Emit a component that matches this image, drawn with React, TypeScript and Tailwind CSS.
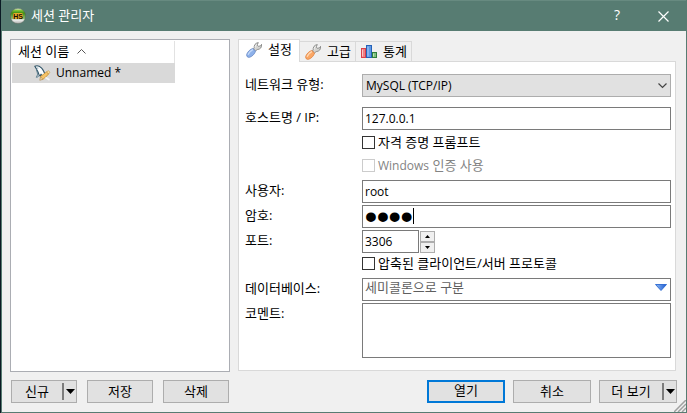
import { useState } from "react";
import type { ReactNode } from "react";

const tabs = [
  { id: "settings", label: "설정" },
  { id: "advanced", label: "고급" },
  { id: "stats", label: "통계" },
];

const fieldClass =
  "block h-[23px] w-full rounded-none border border-[#7a7a7a] bg-white px-[2px] pb-px text-xs text-black outline-none";
const buttonClass = "h-[23px] border border-[#adadad] bg-[#e1e1e1] pb-[2px] text-[13px] leading-[18px]";

function AppIcon() {
  return (
    <svg width="16" height="16" viewBox="0 0 16 16" aria-hidden="true">
      <defs>
        <linearGradient id="ball" x1="0" y1="0" x2="0" y2="1">
          <stop offset="0" stopColor="#f4f7ee" />
          <stop offset="0.14" stopColor="#7fc436" />
          <stop offset="0.3" stopColor="#3f8f12" />
          <stop offset="0.68" stopColor="#8fb873" />
          <stop offset="0.75" stopColor="#f2f2f2" />
          <stop offset="1" stopColor="#a9aca9" />
        </linearGradient>
      </defs>
      <circle cx="8" cy="8" r="7.7" fill="url(#ball)" stroke="#4c5f50" strokeWidth="0.5" />
      <rect x="3" y="5" width="10" height="6" rx="1.500" fill="#e8a92c" />
      <text x="8" y="10.500" textAnchor="middle" fontSize="7" fontWeight="700" fontFamily="Liberation Sans, sans-serif" fill="#1a1200">
        HS
      </text>
    </svg>
  );
}

function DolphinIcon() {
  return (
    <svg width="17" height="16" viewBox="0 0 17 16" aria-hidden="true">
      <path
        d="M.8 1.2C3 .2 5.5 1 7.4 2.8c1.5 1.4 2 2.9 2.8 4.6.6 1.3 1.6 1.8 2.4 3.2-1.6-.2-2.6.3-3.2 1.4-.7-1.3-1.8-1.7-2.4-2.8l-.8 1.9C4.900 10.500 4.800 9 4.300 7.600 3.700 5.900 2.700 5.100 2.300 3.600Z"
        fill="#fbfdfe"
        stroke="#2f5366"
        strokeWidth="1.100"
        strokeLinejoin="round"
      />
      <path d="M2.300 3.600c.4 3 1.300 3.600 1.200 6.200l-1.200 2.500c1.700-.1 2.300-.9 3-2" fill="none" stroke="#53788a" strokeWidth="0.9" />
      <circle cx="3.800" cy="2.900" r="0.500" fill="#3c6478" />
      <path d="M6.500 11.500 12.500 7l2.200 1.800-1.100 1.400-4.800 4.200-2.300-.3Z" fill="#f6c468" stroke="#c98e2f" strokeWidth="0.8" />
      <path d="m12.500 7 1.800-1.300 1.700 1.600-1.300 1.500Z" fill="#fbdf9f" stroke="#c98e2f" strokeWidth="0.6" />
      <path d="m6.500 11.500-.7 3.800 3-1Z" fill="#f3dcae" stroke="#a98347" strokeWidth="0.6" />
      <path d="m11.500 12.500 4 2.500" stroke="#f4f4f4" strokeWidth="1.500" />
    </svg>
  );
}

function WrenchIcon({ light, main, dark }: { light: string; main: string; dark: string }) {
  return (
    <svg width="16" height="16" viewBox="0 0 16 16" aria-hidden="true">
      <path
        d="M8.200 6.200C7.700 3.300 9.400 1 12.300.600L11.200 2.900 12.400 4.400 14.900 3.700 15.600 2.300C16 5.300 14.200 7.500 11.200 7.600L9.600 8.900 7.200 6.900Z"
        fill="#d3d3d0"
        stroke="#868786"
        strokeWidth="0.900"
        strokeLinejoin="round"
      />
      <path d="M9.200 5.500c-.1-1.500.5-2.600 1.500-3.300" fill="none" stroke="#f8f8f8" strokeWidth="0.900" />
      <path
        d="M6.900 6.500 9.500 9.100C9 11.500 6.500 14.400 3.600 15.300 1.600 15.700.3 14.300.7 12.400 1.500 9.700 4.400 7.100 6.900 6.500Z"
        fill={main}
        stroke={dark}
        strokeWidth="0.800"
      />
      <path d="M2.300 12.300c.8-1.900 2.200-3.400 4.100-4.500" fill="none" stroke={light} strokeWidth="1.400" strokeLinecap="round" />
    </svg>
  );
}

function ChartIcon() {
  return (
    <svg width="16" height="16" viewBox="0 0 16 16" aria-hidden="true">
      <rect x="0.500" y="4.500" width="4" height="9" fill="#ee7f84" stroke="#d9404a" />
      <path d="M1.500 5.500v7" stroke="#fbc4c4" />
      <rect x="5.500" y="1.500" width="5" height="12" fill="#5f98e4" stroke="#2462b8" />
      <path d="M7 2.500v10" stroke="#a9cdf8" />
      <rect x="11.500" y="8.500" width="4" height="5" fill="#7fc07d" stroke="#2f7d3c" />
      <path d="M12.500 9.500v3" stroke="#bfe6b8" />
    </svg>
  );
}

function TabIcon({ id }: { id: string }) {
  if (id === "settings") return <WrenchIcon light="#c5daf8" main="#8db1ea" dark="#6486c4" />;
  if (id === "advanced") return <WrenchIcon light="#ffd9b4" main="#fba765" dark="#e0803c" />;
  return <ChartIcon />;
}

function Row({ label, htmlFor, children, className = "" }: { label?: string; htmlFor?: string; children: ReactNode; className?: string }) {
  return (
    <div className={`grid grid-cols-[117px_1fr] ${className}`}>
      {label ? (
        <label htmlFor={htmlFor} className="leading-[20px]">
          {label}
        </label>
      ) : (
        <span />
      )}
      {children}
    </div>
  );
}

function Check({ children, disabled = false }: { children: ReactNode; disabled?: boolean }) {
  return (
    <label className={`flex items-center gap-[3px] leading-[21px] ${disabled ? "text-[#838383]" : ""}`}>
      <input
        type="checkbox"
        disabled={disabled}
        className="size-[13px] shrink-0 appearance-none border border-[#333] bg-white checked:bg-[#333] disabled:border-[#ccc]"
      />
      <span>{children}</span>
    </label>
  );
}

function SplitButton({ label, className }: { label: string; className: string }) {
  return (
    <div className={`flex h-[23px] border border-[#adadad] bg-[#e1e1e1] ${className}`}>
      <button className="flex-1 pb-[2px] leading-[18px]">{label}</button>
      <button aria-label={`${label} 메뉴`} className="my-[2px] flex w-[14px] items-center justify-center border-l-2 border-[#7d7d7d]">
        <svg width="9" height="5" viewBox="0 0 9 5" aria-hidden="true">
          <path d="M0 0h9L4.500 5Z" />
        </svg>
      </button>
    </div>
  );
}

export default function App() {
  const [activeTab, setActiveTab] = useState("settings");
  const [port, setPort] = useState(3306);

  return (
    <div className="flex min-h-screen bg-[#0b1a24] pl-px font-['Open_Sans','Noto_Sans_CJK_KR',sans-serif] text-[13px] text-black">
      <div className="flex flex-1 flex-col border-x border-b border-[#577c72] bg-[#f0f0f0]">
        {/* Title bar */}
        <header className="flex h-[31px] shrink-0 items-center border-t border-[#678a80] bg-[#577c72] pl-2 text-white">
          <AppIcon />
          <h1 className="ml-[5px] flex-1 pb-[2px] leading-[20px]">세션 관리자</h1>
          <button aria-label="도움말" className="w-[46px] pb-[2px] text-sm">
            ?
          </button>
          <button aria-label="닫기" className="flex w-[46px] justify-center">
            <svg width="11" height="11" viewBox="0 0 11 11" aria-hidden="true">
              <path d="m.5.5 10 10m0-10-10 10" stroke="#fff" strokeWidth="1.200" />
            </svg>
          </button>
        </header>

        <main className="flex flex-1 gap-2 pt-2 pr-[10px] pl-2">
          {/* Session list */}
          <section className="w-[220px] shrink-0 border border-[#abadb3] bg-white p-px">
            <div className="w-[163px]">
              <button className="flex h-[22px] w-full items-center gap-2 border-r border-[#e2e2e2] pb-[2px] pl-[6px] leading-[20px]">
                세션 이름
                <svg width="9" height="5" viewBox="0 0 9 5" aria-hidden="true">
                  <path d="m.5 4.500 4-4 4 4" fill="none" stroke="#555" />
                </svg>
              </button>
              <button className="flex h-5 w-full items-center gap-[5px] bg-[#d9d9d9] pl-[22px] text-xs">
                <DolphinIcon />
                Unnamed *
              </button>
            </div>
          </section>

          <section className="flex flex-1 flex-col pb-px">
            <div role="tablist" className="flex items-end">
              {tabs.map((tab) => (
                <button
                  key={tab.id}
                  role="tab"
                  aria-selected={activeTab === tab.id}
                  onClick={() => setActiveTab(tab.id)}
                  className={`flex items-center border-t border-r border-[#d9d9d9] ${
                    activeTab === tab.id
                      ? "relative -mb-px h-[23px] w-[62px] gap-[6px] border-l bg-white pb-[3px] pl-[7px]"
                      : "h-5 w-14 gap-[6px] bg-[#f0f0f0] pl-[5px]"
                  }`}
                >
                  <TabIcon id={tab.id} />
                  {tab.label}
                </button>
              ))}
            </div>

            <form className="flex flex-1 flex-col border border-[#d9d9d9] bg-white pt-3 pr-1 pb-3 pl-[6px]" onSubmit={(e) => e.preventDefault()}>
              <Row label="네트워크 유형:" htmlFor="nettype">
                <div className="relative">
                  <select id="nettype" className="block h-[23px] w-full appearance-none border border-[#adadad] bg-[#e1e1e1] px-[3px] text-xs outline-none">
                    <option>MySQL (TCP/IP)</option>
                  </select>
                  <svg width="9" height="6" viewBox="0 0 9 6" className="pointer-events-none absolute top-[9px] right-1" aria-hidden="true">
                    <path d="m.5.5 4 4 4-4" fill="none" stroke="#444" strokeWidth="1.200" />
                  </svg>
                </div>
              </Row>
              <Row label="호스트명 / IP:" htmlFor="host" className="mt-[10px]">
                <input id="host" className={fieldClass} defaultValue="127.0.0.1" />
              </Row>
              <Row className="mt-px h-[23px]">
                <Check>자격 증명 프롬프트</Check>
              </Row>
              <Row className="h-[23px]">
                <Check disabled>
                  <span className="text-xs">Windows</span> 인증 사용
                </Check>
              </Row>
              <Row label="사용자:" htmlFor="user" className="mt-[3px]">
                <input id="user" className={fieldClass} defaultValue="root" />
              </Row>
              <Row label="암호:" htmlFor="password" className="mt-[2px]">
                <div className="relative">
                  <input
                    id="password"
                    type="password"
                    defaultValue="root"
                    className="block h-[23px] w-full border border-[#7a7a7a] bg-white px-[2px] font-['Liberation_Sans',sans-serif] text-[34px] leading-[21px] font-bold outline-none"
                  />
                  <span className="absolute top-[3px] left-[51px] h-4 w-px bg-black" />
                </div>
              </Row>
              <Row label="포트:" htmlFor="port" className="mt-[2px]">
                <div className="flex gap-px">
                  <div className="w-[57px]">
                    <input
                      id="port"
                      className={fieldClass}
                      value={port}
                      onChange={(e) => setPort(Number(e.target.value) || 0)}
                    />
                  </div>
                  <div className="flex w-[15px] flex-col justify-center">
                    <button type="button" aria-label="포트 증가" onClick={() => setPort(port + 1)} className="flex h-[11px] items-center justify-center border border-[#adadad] bg-[#f0f0f0]">
                      <svg width="5" height="3" viewBox="0 0 5 3" aria-hidden="true">
                        <path d="M0 3h5L2.500 0Z" />
                      </svg>
                    </button>
                    <button type="button" aria-label="포트 감소" onClick={() => setPort(port - 1)} className="flex h-[11px] items-center justify-center border border-[#adadad] bg-[#f0f0f0]">
                      <svg width="5" height="3" viewBox="0 0 5 3" aria-hidden="true">
                        <path d="M0 0h5L2.500 3Z" />
                      </svg>
                    </button>
                  </div>
                </div>
              </Row>
              <Row className="h-[21px]">
                <Check>압축된 클라이언트/서버 프로토콜</Check>
              </Row>
              <Row label="데이터베이스:" htmlFor="database" className="mt-1">
                <div className="flex h-[23px] border border-[#7a7a7a]">
                  <input
                    id="database"
                    placeholder="세미콜론으로 구분"
                    className="min-w-0 flex-1 px-[2px] pb-[3px] text-[13px] outline-none placeholder:text-[#5f5f5f]"
                  />
                  <button type="button" aria-label="데이터베이스 선택" className="flex w-[18px] justify-center pt-[5px]">
                    <svg width="12" height="7" viewBox="0 0 12 7" aria-hidden="true">
                      <defs>
                        <linearGradient id="drop" x1="0" y1="0" x2="1" y2="0">
                          <stop offset="0" stopColor="#8fbcf5" />
                          <stop offset="1" stopColor="#1c58cf" />
                        </linearGradient>
                      </defs>
                      <path d="M.5.500h11L6 6.500Z" fill="url(#drop)" stroke="#2a68d0" strokeWidth="0.900" />
                    </svg>
                  </button>
                </div>
              </Row>
              <Row label="코멘트:" htmlFor="comment" className="mt-[2px] flex-1">
                <textarea id="comment" className="block min-h-[55px] w-full resize-none border border-[#7a7a7a] bg-white p-[3px] text-xs outline-none" />
              </Row>
            </form>
          </section>
        </main>

        <footer className="relative flex justify-between px-[9px] pt-2 pb-[9px]">
          <div className="flex gap-[10px]">
            <SplitButton label="신규" className="w-[66px]" />
            <button className={`w-[66px] ${buttonClass}`}>저장</button>
            <button className={`w-[66px] ${buttonClass}`}>삭제</button>
          </div>
          <div className="flex gap-2">
            <button className="h-[23px] w-[78px] border-2 border-[#0078d7] bg-[#e1e1e1] pb-[2px] leading-[17px]">열기</button>
            <button className={`w-[78px] ${buttonClass}`}>취소</button>
            <SplitButton label="더 보기" className="w-[78px]" />
          </div>
          <svg width="12" height="12" viewBox="0 0 12 12" className="absolute right-0 bottom-0" aria-hidden="true">
            <path d="M0 12 12 0M4 12l8-8M8 12l4-4" stroke="#a0a0a0" strokeWidth="1.500" />
          </svg>
        </footer>
      </div>
    </div>
  );
}
